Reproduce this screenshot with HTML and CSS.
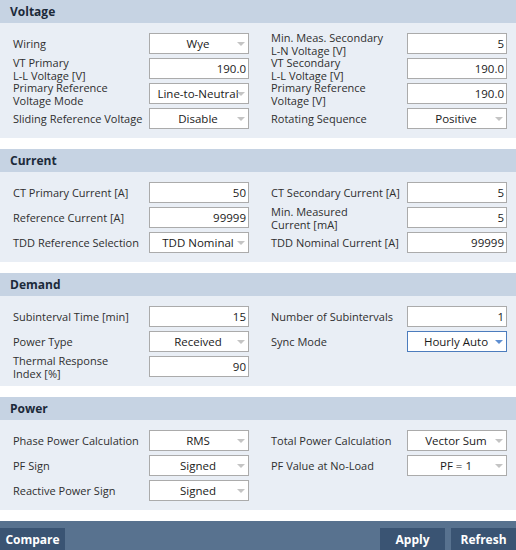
FILE: index.html
```html
<!DOCTYPE html>
<html>
<head>
<meta charset="utf-8">
<title>Settings</title>
<link rel="stylesheet" href="styles.css">
</head>
<body>
<div class="page">
  <section class="section">
    <div class="sec-head">Voltage</div>
    <div class="sec-body">
      <div class="col">
        <div class="field"><span class="label">Wiring</span><div class="select"><span class="val">Wye</span><i class="arrow"></i></div></div>
        <div class="field"><span class="label">VT Primary<br>L-L Voltage [V]</span><div class="input">190.0</div></div>
        <div class="field"><span class="label">Primary Reference<br>Voltage Mode</span><div class="select"><span class="val">Line-to-Neutral</span><i class="arrow"></i></div></div>
        <div class="field"><span class="label">Sliding Reference Voltage</span><div class="select"><span class="val">Disable</span><i class="arrow"></i></div></div>
      </div>
      <div class="col">
        <div class="field"><span class="label">Min. Meas. Secondary<br>L-N Voltage [V]</span><div class="input">5</div></div>
        <div class="field"><span class="label">VT Secondary<br>L-L Voltage [V]</span><div class="input">190.0</div></div>
        <div class="field"><span class="label">Primary Reference<br>Voltage [V]</span><div class="input">190.0</div></div>
        <div class="field"><span class="label">Rotating Sequence</span><div class="select"><span class="val">Positive</span><i class="arrow"></i></div></div>
      </div>
    </div>
  </section>

  <section class="section">
    <div class="sec-head">Current</div>
    <div class="sec-body">
      <div class="col">
        <div class="field"><span class="label">CT Primary Current [A]</span><div class="input">50</div></div>
        <div class="field"><span class="label">Reference Current [A]</span><div class="input">99999</div></div>
        <div class="field"><span class="label">TDD Reference Selection</span><div class="select"><span class="val">TDD Nominal</span><i class="arrow"></i></div></div>
      </div>
      <div class="col">
        <div class="field"><span class="label">CT Secondary Current [A]</span><div class="input">5</div></div>
        <div class="field"><span class="label">Min. Measured<br>Current [mA]</span><div class="input">5</div></div>
        <div class="field"><span class="label">TDD Nominal Current [A]</span><div class="input">99999</div></div>
      </div>
    </div>
  </section>

  <section class="section">
    <div class="sec-head">Demand</div>
    <div class="sec-body">
      <div class="col">
        <div class="field"><span class="label">Subinterval Time [min]</span><div class="input">15</div></div>
        <div class="field"><span class="label">Power Type</span><div class="select"><span class="val">Received</span><i class="arrow"></i></div></div>
        <div class="field"><span class="label">Thermal Response<br>Index [%]</span><div class="input">90</div></div>
      </div>
      <div class="col">
        <div class="field"><span class="label">Number of Subintervals</span><div class="input">1</div></div>
        <div class="field"><span class="label">Sync Mode</span><div class="select focused"><span class="val">Hourly Auto</span><i class="arrow"></i></div></div>
      </div>
    </div>
  </section>

  <section class="section">
    <div class="sec-head">Power</div>
    <div class="sec-body">
      <div class="col">
        <div class="field"><span class="label">Phase Power Calculation</span><div class="select"><span class="val">RMS</span><i class="arrow"></i></div></div>
        <div class="field"><span class="label">PF Sign</span><div class="select"><span class="val">Signed</span><i class="arrow"></i></div></div>
        <div class="field"><span class="label">Reactive Power Sign</span><div class="select"><span class="val">Signed</span><i class="arrow"></i></div></div>
      </div>
      <div class="col">
        <div class="field"><span class="label">Total Power Calculation</span><div class="select"><span class="val">Vector Sum</span><i class="arrow"></i></div></div>
        <div class="field"><span class="label">PF Value at No-Load</span><div class="select"><span class="val">PF = 1</span><i class="arrow"></i></div></div>
      </div>
    </div>
  </section>

  <footer class="footer">
    <button class="btn">Compare</button>
    <div class="spacer"></div>
    <button class="btn">Apply</button>
    <button class="btn">Refresh</button>
  </footer>
</div>
</body>
</html>
```

FILE: styles.css
```css
html, body {
  margin: 0;
  padding: 0;
  overflow: hidden;
  background: #ffffff;
}
body {
  font-family: "Open Sans", "Noto Sans", sans-serif;
  font-size: 11px;
  color: #2e2e2e;
}
.page {
  width: 516px;
  height: 550px;
  display: flex;
  flex-direction: column;
}
.section {
  margin-bottom: 11px;
}
.sec-head {
  height: 23px;
  line-height: 23px;
  background: #c6d3e3;
  padding-left: 10px;
  font-weight: 700;
  font-size: 12px;
  color: #1c2a3a;
}
.sec-body {
  background: #e9eef5;
  padding: 10px 0 9px 0;
  display: grid;
  grid-template-columns: 258px 258px;
}
.col {
  display: flex;
  flex-direction: column;
  gap: 4px;
  padding-left: 13px;
}
.field {
  height: 21px;
  display: flex;
  align-items: center;
}
.label {
  width: 136px;
  line-height: 13px;
  white-space: nowrap;
  color: #2f2f2f;
}
.input, .select {
  box-sizing: border-box;
  width: 100px;
  height: 21px;
  background: #ffffff;
  border: 1px solid #ababab;
  line-height: 19px;
  color: #1a1a1a;
  font-size: 11.5px;
}
.input {
  text-align: right;
  padding-right: 2px;
}
.select {
  position: relative;
  text-align: center;
  padding-right: 2px;
  white-space: nowrap;
}
.select .val {
  display: inline-block;
}
.arrow {
  position: absolute;
  right: 3px;
  top: 8px;
  width: 0;
  height: 0;
  border-left: 4px solid transparent;
  border-right: 4px solid transparent;
  border-top: 4px solid #c4c4c4;
}
.select.focused {
  border-color: #4c7cbd;
}
.select.focused .arrow {
  border-top-color: #5f8fd1;
}
.footer {
  margin-top: auto;
  height: 29px;
  box-sizing: border-box;
  padding-top: 7px;
  background: #58728f;
  display: flex;
  gap: 6px;
}
.spacer {
  flex: 1;
}
.btn {
  width: 65px;
  height: 22px;
  border: none;
  padding: 2px 0 0 0;
  margin: 0;
  background: #3a5473;
  color: #ffffff;
  font-family: "Open Sans", "Noto Sans", sans-serif;
  font-weight: 700;
  font-size: 12px;
  line-height: 20px;
  text-align: center;
}
```
